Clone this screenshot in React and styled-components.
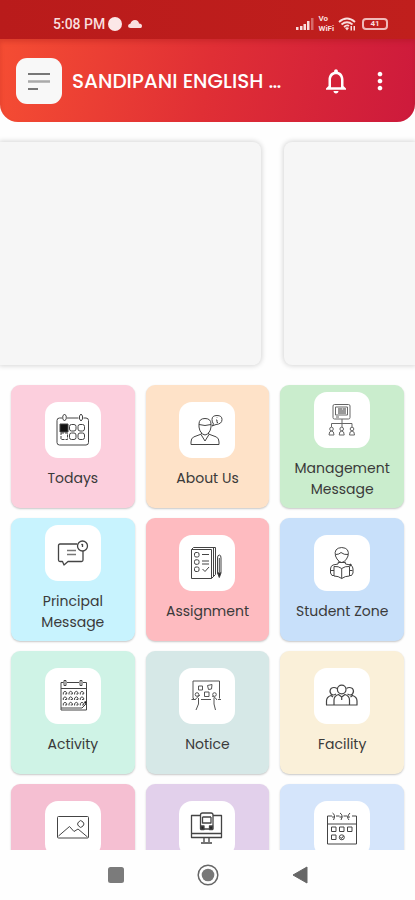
import React from 'react'
import styled, { createGlobalStyle } from 'styled-components'
import { MdMoreVert, MdNotificationsNone } from 'react-icons/md'

const TodayIcon = () => (
  <IconSvg viewBox="0 0 36 36">
    <path d="M7 6H4.500Q2 6 2 8.500V30.500Q2 33 4.500 33H31Q33.500 33 33.500 30.500V8.500Q33.500 6 31 6H28.500M12 6H23.500" />
    <path d="M9.500 2L7.800 4V7L9.500 9L11.200 7V4ZM26 2L24.500 4V7L26 9L27.500 7V4Z" />
    <rect x="5" y="12" width="8" height="8" fill="#111" />
    <rect x="14.500" y="12.500" width="6.500" height="6.500" rx="2" />
    <rect x="23" y="12.500" width="6.500" height="6.500" rx="2" />
    <rect x="6" y="21" width="6.500" height="6.500" strokeDasharray="3 1" />
    <rect x="14.500" y="21" width="6.500" height="6.500" rx="2" />
    <rect x="23" y="21" width="6.500" height="6.500" rx="2" />
  </IconSvg>
)

const AboutIcon = () => (
  <IconSvg viewBox="0 0 36 36">
    <path d="M10 12Q10 6.500 16 6.500T22 12V15Q21 22 16 23Q11 22 10 15ZM10 12.500Q16 14.500 22 12.500" />
    <path d="M12.500 20.500V22L4.500 25Q2 26.500 2 30V32.500H30V30Q30 26.500 27.500 25L19.500 22V20.500M12 22.500L16 29L20 22.500" />
    <path d="M24.500 12L23 14L27 12.500Q33 12 33 7.500Q33 3.500 28 3.500T23 7.500Q23 10 24.500 12ZM28 5.500V6M27 8H28V10.500H29" />
  </IconSvg>
)

const ManagementIcon = () => (
  <IconSvg viewBox="0 0 36 36" $stroke="#666">
    <rect x="9" y="2.500" width="17" height="14.500" rx="1.500" />
    <path d="M11.500 5H23.500V13H11.500Z" />
    <path d="M14 7H18M14 9H22M14 11H22M18.500 7H22" stroke="#333" />
    <path d="M12 15H15M18 17V25M7.500 25V21.500H28V25" />
    <circle cx="7.500" cy="27" r="1.800" />
    <circle cx="17.700" cy="27" r="1.800" />
    <circle cx="28" cy="27" r="1.800" />
    <path d="M5 33Q5 29 7.500 29T10 33ZM15.200 33Q15.200 29 17.700 29T20.200 33ZM25.500 33Q25.500 29 28 29T30.500 33Z" />
  </IconSvg>
)

const PrincipalIcon = () => (
  <IconSvg viewBox="0 0 36 36" $weight={1.3}>
    <path d="M22 9H5Q3.500 9 3.500 10.500V25Q3.500 26.500 5 26.500H7.500L9 30L13 26.500H26.500Q28 26.500 28 25V16" />
    <path d="M12 15.500H21M12 19.500H21" stroke="#777" />
    <circle cx="27.500" cy="11" r="5" />
    <path d="M27.500 9V12M26.500 10L27.500 9" />
  </IconSvg>
)

const AssignmentIcon = () => (
  <IconSvg viewBox="0 0 36 36">
    <path d="M2.500 4.500H22.500V33.500H2.500ZM2.500 4.500L4.500 2.500H26.500V29.500L22.500 33.500M24.500 3V31" />
    <rect x="5.500" y="7.500" width="4.500" height="4.500" rx="1.500" />
    <rect x="5.500" y="14.800" width="4.500" height="4.500" rx="1.500" />
    <rect x="5.500" y="22" width="4.500" height="4.500" rx="1.500" />
    <path d="M13 9.500H20M13 16H20M13 19H20M13.500 24L16 26.500L20 22" />
    <path d="M28.500 28V13Q28.500 10 30.300 10T32 13V28ZM30.300 13V27" />
    <path d="M28.500 28H32L30.300 32.500Z" fill="#222" />
  </IconSvg>
)

const StudentIcon = () => (
  <IconSvg viewBox="0 0 36 36">
    <path d="M11.500 11Q9.500 3 17.700 2.500Q26 3 24 11L22.500 14Q20 17.500 17.700 17.500T13 14ZM12 9.500Q15 9.500 17 7.500Q20 10 24 9.500" />
    <path d="M14.500 16.500L14 19L9 20Q6.500 21 6.500 24V28L8 30.500H10M21 16.500L21.500 19L26.500 20Q29 21 29 24V28L27.500 30.500H25.500M14.500 17.500H21" />
    <path d="M10 21.500Q14.500 21 17.700 23.500Q21 21 25.500 21.500V31Q21 31 17.700 33.500Q14.500 31 10 31ZM17.700 23.500V33.500M7 25.500H10M25.500 25.500H28.500" />
    <circle cx="26.500" cy="20" r=".8" fill="#111" />
  </IconSvg>
)

const ActivityIcon = () => (
  <IconSvg viewBox="0 0 36 36">
    <path d="M8.500 4.500H6V32H31.500V4.500H28M12 4.500H24M6 10.500H31.500M6 30H27L31.500 25.500" />
    <path d="M9 2.500H11V7.500H9ZM25 2.500H27V7.500H25Z" />
    {[15, 20.5, 26].map((y) =>
      [10, 15.7, 21.3, 27].map((x) => (
        <path key={x + '-' + y} d={`M${x - 1.7} ${y + 1.5}V${y - 0.5}L${x} ${y - 1.7}L${x + 1.7} ${y - 0.5}V${y + 1}H${x}`} />
      )),
    )}
    <circle cx="30.500" cy="24.500" r="1" fill="#111" />
  </IconSvg>
)

const NoticeIcon = () => (
  <IconSvg viewBox="0 0 36 36" $stroke="#555">
    <path d="M5 20.500H4V3H30.500V20.500M12 21.500H22M2.500 21.500H6M29 21.500H32" />
    <path d="M9.500 8H13.500V12H9.500ZM18.500 7.500L23 6.500L22.500 11L19.500 11.500ZM15.500 14H20V18.500H15.500Z" />
    <circle cx="8" cy="16.500" r="1.800" />
    <circle cx="25.500" cy="16.500" r="1.800" />
    <path d="M6 22L8 19.500L11 17M9.500 20V26L7 32M28 22L26 19.500L23 18M25 20V26L26.500 32" />
  </IconSvg>
)

const FacilityIcon = () => (
  <IconSvg viewBox="0 0 36 36" $weight={1.2}>
    <circle cx="17.700" cy="11.500" r="4.300" />
    <path d="M13 10.500Q10 8.500 7 10.500Q5 13 7 16Q9 18 12 16M22.500 10.500Q25 8.500 28.500 10.500Q30.500 13 28.500 16Q26.500 18 23.500 16" />
    <path d="M10 27V22Q10 18 14.500 16.500L17.700 19L21 16.500Q25.500 18 25.500 22V27ZM10 27H2.500V23Q2.500 19 7 17.500L9 19M25.500 27H33V23Q33 19 28.500 17.500L26.500 19M17.700 19V22" />
  </IconSvg>
)

const GalleryIcon = () => (
  <IconSvg viewBox="0 0 36 36">
    <rect x="2.500" y="5.500" width="31" height="21.500" rx="1" />
    <path d="M3.500 25L14.500 15.500L19 20.500L23 18L32.500 26" />
    <path d="M25.700 9.500L28 11L29 13L28 15L25.700 16.500L23.500 15L22.500 13L23.500 11Z" />
  </IconSvg>
)

const OnlineIcon = () => (
  <IconSvg viewBox="0 0 36 36" $weight={1.3}>
    <path d="M11.500 4.500H2.500V26.500H32.500V4.500H24M2.500 22.500H32.500M15 26.500V31M20 26.500V31M12 32H23" />
    <path d="M11.500 18V4Q11.500 2 13.500 2H22Q24 2 24 4V18ZM13.500 6H22M13.500 6V12H22V6" />
    <path d="M12 15H15V18.500H12ZM20.500 15H23.500V18.500H20.500Z" fill="#222" />
  </IconSvg>
)

const CalendarIcon = () => (
  <IconSvg viewBox="0 0 36 36">
    <path d="M8 5H3.500V33H32.500V5H28M12 5H15.500M19.500 5H23M3.500 13H32.500" />
    <path d="M8.500 2Q12 4 9.500 9M16 2Q19.500 4 17 9M26 2Q22 6 25 9M8 6H11M15.500 6H18.500M23 6H26" />
    <path d="M7.500 16H12V20.500H7.500ZM15.500 16H20V20.500H15.500ZM23.500 16H28V20.500H23.500ZM7.500 24H12V28.500H7.500Z" />
    <circle cx="17.800" cy="26.300" r="2.500" />
    <path d="M16.500 26L17.500 27.500L19.500 25" />
  </IconSvg>
)

const tiles = [
  { id: 'todays', label: 'Todays', color: '#fccfdd', icon: TodayIcon },
  { id: 'about', label: 'About Us', color: '#fee2c8', icon: AboutIcon },
  { id: 'management', label: 'Management Message', color: '#caedcd', icon: ManagementIcon },
  { id: 'principal', label: 'Principal Message', color: '#c8f3fe', icon: PrincipalIcon },
  { id: 'assignment', label: 'Assignment', color: '#febbc0', icon: AssignmentIcon },
  { id: 'student', label: 'Student Zone', color: '#c8e0fa', icon: StudentIcon },
  { id: 'activity', label: 'Activity', color: '#cff3e6', icon: ActivityIcon },
  { id: 'notice', label: 'Notice', color: '#d6e8e7', icon: NoticeIcon },
  { id: 'facility', label: 'Facility', color: '#faf0d9', icon: FacilityIcon },
  { id: 'gallery', color: '#f5bfd2', icon: GalleryIcon },
  { id: 'online', color: '#e2d0eb', icon: OnlineIcon },
  { id: 'calendar', color: '#d5e5fb', icon: CalendarIcon },
]

const App = () => {
  return (
    <Screen>
      <GlobalStyle />
      <StatusBar>
        <Clock>5:08 PM</Clock>
        <Notch />
        <StatusSvg width="14" height="10" viewBox="0 0 14 10">
          <path d="M2.500 9Q0 9 0 7T2.500 4.500Q3.500 1 7 1T11 4.500Q14 4.500 14 7T12 9Z" />
        </StatusSvg>
        <StatusRight>
          <StatusSvg width="18" height="12" viewBox="0 0 18 12">
            <path d="M0 9H2.500V12H0ZM4 8H6.500V12H4ZM7.500 6H10V12H7.500ZM11 3H13.500V12H11Z" />
            <path d="M15 0H17.500V12H15Z" opacity=".4" />
          </StatusSvg>
          <VoWifi>
            <span>Vo</span>
            <span>WiFi</span>
          </VoWifi>
          <StatusSvg width="18" height="14" viewBox="0 0 18 14">
            <path d="M1 5Q9 -2 17 5M3.500 7.500Q9 3 14.500 7.500M6 10Q9 7.500 11 9" fill="none" stroke="#f9dede" strokeWidth="1.800" />
            <path d="M7 11L9 13.500L11 11Q9 9.500 7 11ZM12.500 9H14V13.500H12.500ZM15.500 9H17V13.500H15.500Z" />
          </StatusSvg>
          <Battery>41</Battery>
        </StatusRight>
      </StatusBar>

      <Header>
        <MenuButton aria-label="Menu">
          <svg width="22" height="18" viewBox="0 0 22 18">
            <path d="M0 2H22" stroke="#777" strokeWidth="2" />
            <path d="M0 9.500H22" stroke="#aaa" strokeWidth="2.500" />
            <path d="M0 17H10" stroke="#777" strokeWidth="2" />
          </svg>
        </MenuButton>
        <Title>SANDIPANI ENGLISH …</Title>
        <HeaderButton aria-label="Notifications">
          <MdNotificationsNone size={30} />
        </HeaderButton>
        <HeaderButton aria-label="More options">
          <MdMoreVert size={28} />
        </HeaderButton>
      </Header>

      <Content>
        <Slider>
          <Slide $grow={2} $radius="0 8px 8px 0" />
          <Slide $grow={1} $radius="8px 0 0 8px" />
        </Slider>
        <Grid>
          {tiles.map(({ id, label, color, icon: Icon }) => (
            <Tile key={id} $color={color} aria-label={label || id}>
              <IconBox>
                <Icon />
              </IconBox>
              <Label>{label}</Label>
            </Tile>
          ))}
        </Grid>
      </Content>

      <NavBar>
        <NavButton aria-label="Recent apps">
          <svg width="16" height="16" viewBox="0 0 16 16">
            <rect width="16" height="16" rx="2.500" fill="#7b7b7b" />
          </svg>
        </NavButton>
        <NavButton aria-label="Home">
          <svg width="22" height="22" viewBox="0 0 22 22">
            <circle cx="11" cy="11" r="9.800" fill="none" stroke="#666" strokeWidth="1.500" />
            <circle cx="11" cy="11" r="6.300" fill="#777" />
          </svg>
        </NavButton>
        <NavButton aria-label="Back">
          <svg width="16" height="18" viewBox="0 0 16 18">
            <path d="M1 9L15 1V17Z" fill="#666" stroke="#666" strokeLinejoin="round" />
          </svg>
        </NavButton>
      </NavBar>
    </Screen>
  )
}

export default App

const GlobalStyle = createGlobalStyle`
* {
  box-sizing: border-box;
}

body {
  margin: 0;
  background: #fefefe;
  font-family: Poppins, Inter, sans-serif;
}

button {
  border: 0;
  padding: 0;
  background: none;
  color: inherit;
  font: inherit;
  cursor: pointer;
}
`

const Screen = styled.div`
height: 100vh;
display: flex;
flex-direction: column;
overflow: hidden;
`

const StatusBar = styled.div`
height: 39px;
flex-shrink: 0;
padding: 9px 25px 0 53px;
display: flex;
align-items: center;
background: linear-gradient(to right, #b91b1b, #c01f1d);
color: #f9dede;
`

const Clock = styled.span`
font-family: Roboto, sans-serif;
font-size: 14px;
font-weight: 500;
`

const Notch = styled.span`
width: 14px;
height: 14px;
margin: 0 6px 0 3px;
border-radius: 50%;
background: #fbe7e7;
`

const StatusSvg = styled.svg`
fill: #f9dede;
`

const StatusRight = styled.div`
margin-left: auto;
display: flex;
align-items: center;
gap: 4px;
`

const VoWifi = styled.div`
display: flex;
flex-direction: column;
font-family: Roboto, sans-serif;
font-size: 8px;
line-height: 10px;
font-weight: 700;
`

const Battery = styled.div`
width: 26px;
height: 12px;
margin: 0 2px;
border: 2px solid #f0b9b9;
border-radius: 4px;
font-family: Roboto, sans-serif;
font-size: 8px;
line-height: 8px;
font-weight: 700;
text-align: center;
`

const Header = styled.header`
height: 83px;
flex-shrink: 0;
padding: 0 15px 0 16px;
display: flex;
align-items: center;
border-radius: 0 0 18px 18px;
background: linear-gradient(100deg, #f54d33, #e02f35 50%, #cd1a3c);
box-shadow: inset 0 3px 4px rgba(150, 20, 20, 0.25);
color: #fff;
`

const MenuButton = styled.button`
width: 46px;
height: 46px;
border-radius: 11px;
background: #f8f8f8;
display: flex;
align-items: center;
justify-content: center;
`

const Title = styled.h1`
flex: 1;
margin: 0 0 0 10px;
font-size: 20px;
font-weight: 500;
white-space: nowrap;
`

const HeaderButton = styled.button`
width: 40px;
height: 40px;
margin-left: 4px;
display: flex;
align-items: center;
justify-content: center;
`

const Content = styled.main`
flex: 1;
min-height: 0;
overflow: hidden;
`

const Slider = styled.div`
padding: 20px 0;
display: flex;
gap: 23px;
`

const Slide = styled.div`
flex: ${(props) => props.$grow};
height: 223px;
border-radius: ${(props) => props.$radius};
background: #f6f6f6;
box-shadow: 0 0 5px 1px rgba(0, 0, 0, 0.16);
`

const Grid = styled.div`
padding: 0 11px;
display: grid;
grid-template-columns: repeat(3, 1fr);
gap: 10px 11px;
`

const Tile = styled.button`
height: 123px;
padding-bottom: 2px;
border-radius: 9px;
background: ${(props) => props.$color};
box-shadow: 0 1px 2px rgba(0, 0, 0, 0.22);
display: flex;
flex-direction: column;
align-items: center;
justify-content: center;
gap: 10px;
`

const IconBox = styled.span`
width: 56px;
height: 56px;
flex-shrink: 0;
border-radius: 13px;
background: #fff;
display: flex;
align-items: center;
justify-content: center;
`

const IconSvg = styled.svg`
width: 36px;
height: 36px;
fill: none;
stroke: ${(props) => props.$stroke || '#444'};
stroke-width: ${(props) => props.$weight || 1};
stroke-linejoin: round;
`

const Label = styled.span`
max-width: 110px;
min-height: 21px;
font-size: 14px;
line-height: 21px;
color: #3a3a3a;
text-align: center;
`

const NavBar = styled.nav`
height: 50px;
flex-shrink: 0;
display: flex;
align-items: center;
justify-content: center;
gap: 52px;
background: #fefefe;
`

const NavButton = styled.button`
width: 40px;
height: 40px;
display: flex;
align-items: center;
justify-content: center;
`
